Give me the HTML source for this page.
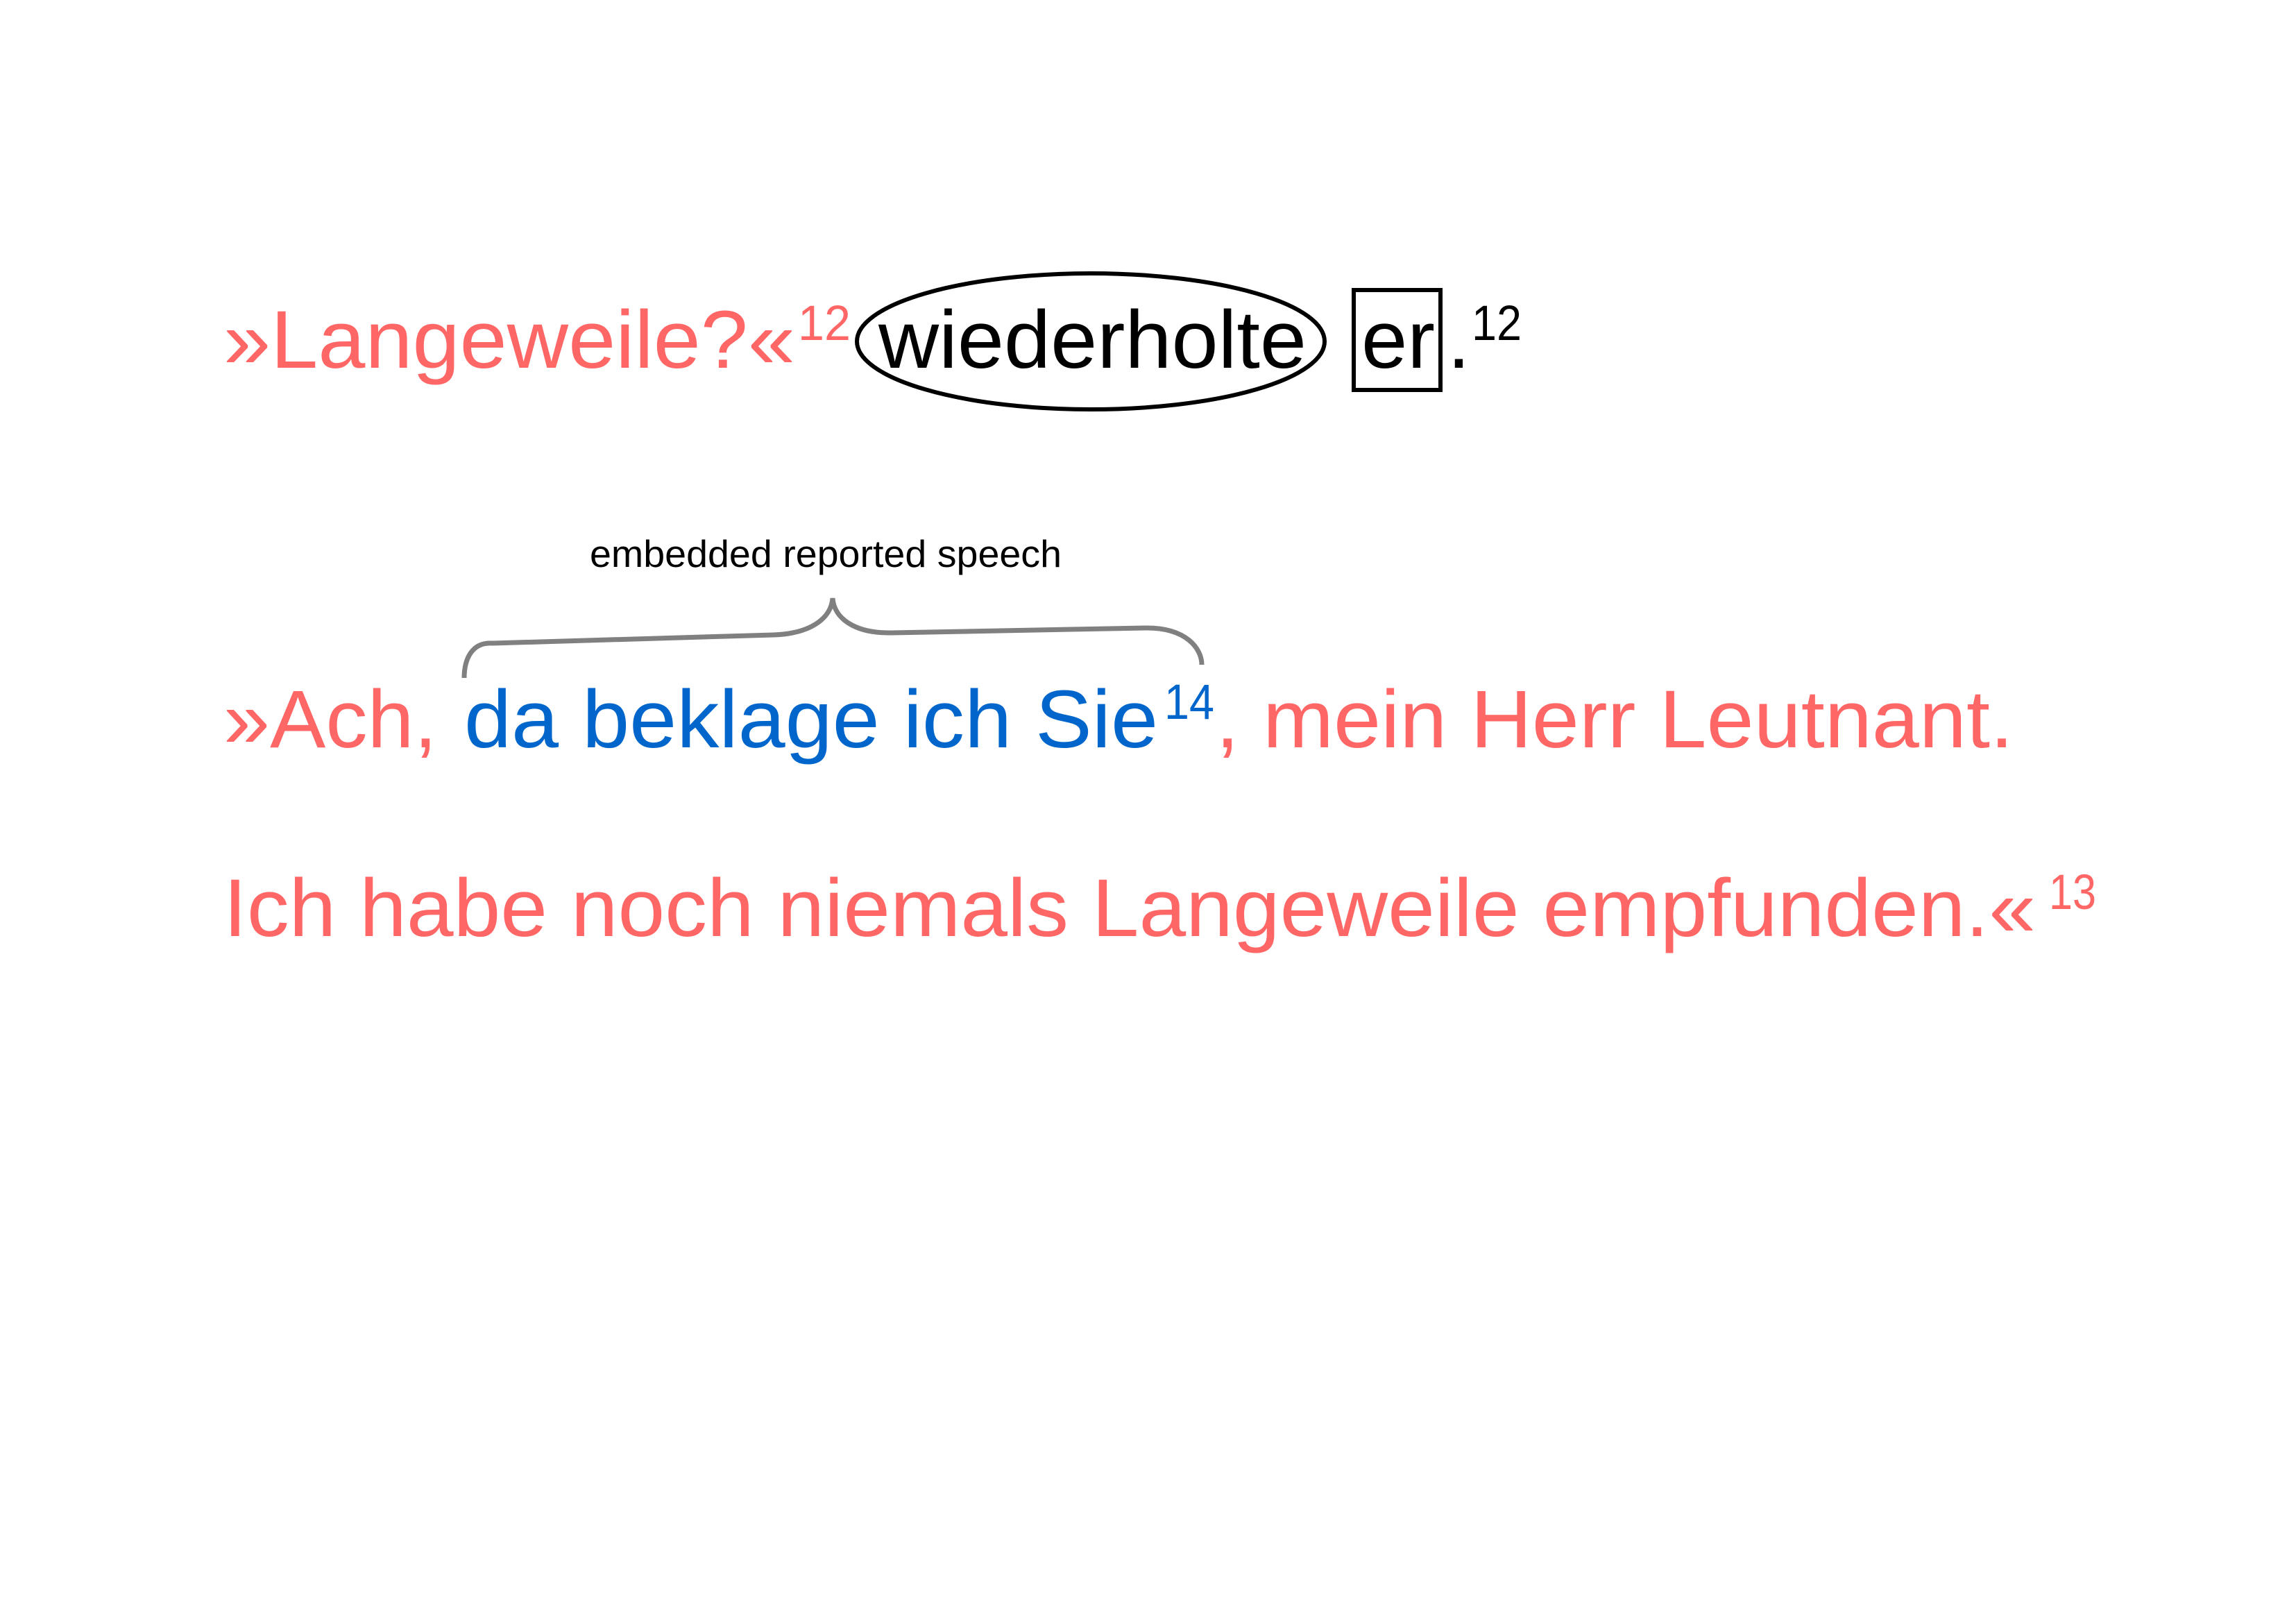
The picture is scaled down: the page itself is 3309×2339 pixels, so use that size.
<!DOCTYPE html>
<html><head><meta charset="utf-8"><style>
html,body{margin:0;padding:0;background:#fff;}
svg{display:block;}
text{font-family:"Liberation Sans",Arial,sans-serif;}
</style></head><body>
<svg width="3309" height="2339" viewBox="0 0 3309 2339" xmlns="http://www.w3.org/2000/svg">
<rect width="3309" height="2339" fill="#fff"/>
<!-- line 1 -->
<text x="322" y="530" font-size="118" fill="#ff6666" textLength="824" lengthAdjust="spacingAndGlyphs">»Langeweile?«</text>
<text x="1150" y="490" font-size="71" fill="#ff6666" textLength="76" lengthAdjust="spacingAndGlyphs">12</text>
<ellipse cx="1572" cy="492" rx="337" ry="98" fill="none" stroke="#000" stroke-width="6"/>
<text x="1266" y="530" font-size="118" fill="#000" textLength="617" lengthAdjust="spacingAndGlyphs">wiederholte</text>
<rect x="1951" y="418" width="125" height="144" fill="none" stroke="#000" stroke-width="6"/>
<text x="1962" y="530" font-size="118" fill="#000" textLength="106" lengthAdjust="spacingAndGlyphs">er</text>
<text x="2086" y="530" font-size="118" fill="#000">.</text>
<text x="2121" y="490" font-size="71" fill="#000" textLength="72" lengthAdjust="spacingAndGlyphs">12</text>
<!-- label and brace -->
<text x="850" y="817" font-size="55" fill="#000" textLength="680" lengthAdjust="spacingAndGlyphs">embedded reported speech</text>
<path d="M669,977 C669,950 680,925 710,927 L1115,915 C1170,913 1198,890 1200,862 C1202,890 1230,913 1285,912 L1650,905 C1710,904 1732,935 1732,958" fill="none" stroke="#808080" stroke-width="7"/>
<!-- line 2 -->
<text x="322" y="1077" font-size="118" fill="#ff6666" textLength="308" lengthAdjust="spacingAndGlyphs">»Ach,</text>
<text x="669" y="1077" font-size="118" fill="#0066cc" textLength="1000" lengthAdjust="spacingAndGlyphs">da beklage ich Sie</text>
<text x="1678" y="1036" font-size="71" fill="#0066cc" textLength="72" lengthAdjust="spacingAndGlyphs">14</text>
<text x="1752" y="1077" font-size="118" fill="#ff6666" textLength="1150" lengthAdjust="spacingAndGlyphs">, mein Herr Leutnant.</text>
<!-- line 3 -->
<text x="322" y="1349" font-size="118" fill="#ff6666" textLength="2612" lengthAdjust="spacingAndGlyphs">Ich habe noch niemals Langeweile empfunden.«</text>
<text x="2953" y="1310" font-size="71" fill="#ff6666" textLength="68" lengthAdjust="spacingAndGlyphs">13</text>
</svg>
</body></html>
